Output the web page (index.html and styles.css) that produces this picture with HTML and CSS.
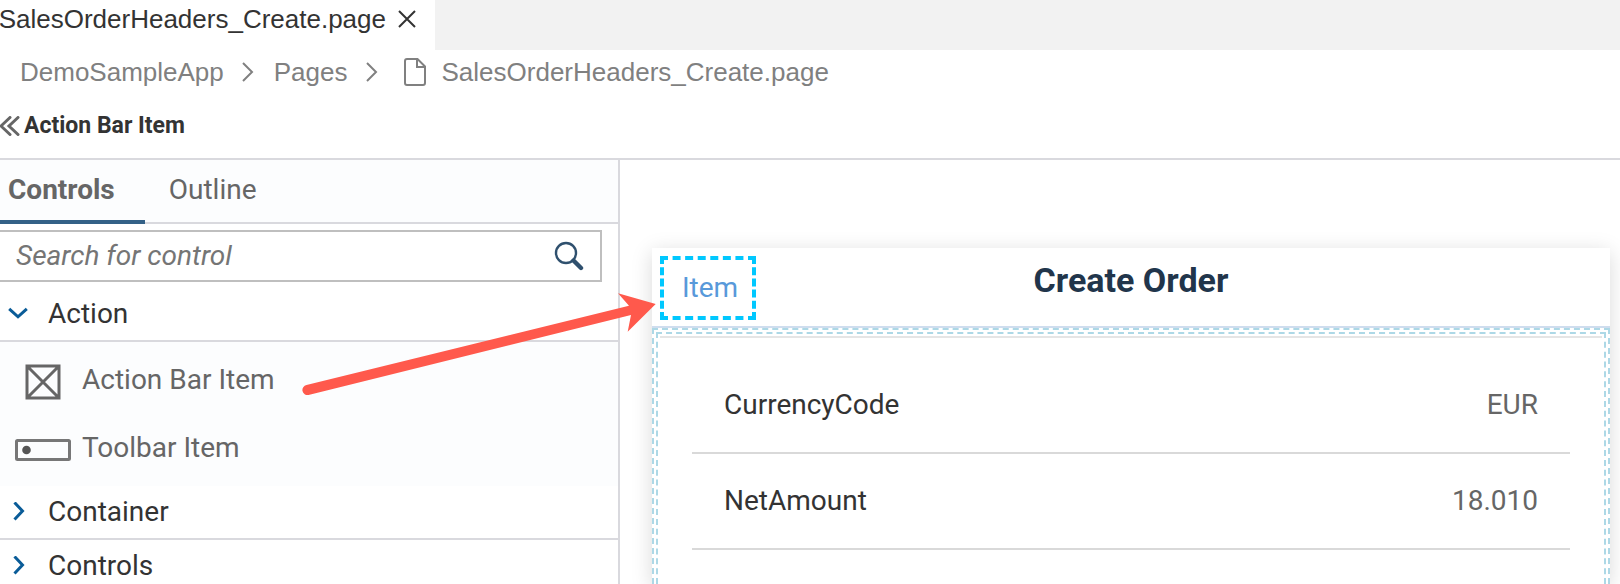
FILE: index.html
```html
<!DOCTYPE html>
<html lang="en">
<head>
<meta charset="utf-8">
<title>SalesOrderHeaders_Create.page</title>
<link rel="stylesheet" href="styles.css">
</head>
<body>
<header class="file-tabs">
  <div class="file-tab">
    <span>SalesOrderHeaders_Create.page</span>
    <button class="icon-button" type="button" aria-label="Close">
      <svg width="18" height="18" viewBox="0 0 18 18"><path d="M1 1 17 17M17 1 1 17" fill="none" stroke="#333" stroke-width="2"/></svg>
    </button>
  </div>
</header>

<nav class="breadcrumb" aria-label="Breadcrumb">
  <a href="#">DemoSampleApp</a>
  <svg class="crumb-sep" width="12" height="20" viewBox="0 0 12 20"><path d="M1 1 10 10 1 19" fill="none" stroke="#808080" stroke-width="2"/></svg>
  <a href="#">Pages</a>
  <svg class="crumb-sep" width="12" height="20" viewBox="0 0 12 20"><path d="M1 1 10 10 1 19" fill="none" stroke="#808080" stroke-width="2"/></svg>
  <svg class="file-icon" width="22" height="28" viewBox="0 0 22 28"><path d="M3 1H13.500L21 8.500V25a2 2 0 0 1-2 2H3a2 2 0 0 1-2-2V3a2 2 0 0 1 2-2ZM13 1V9H21" fill="none" stroke="#808080" stroke-width="2"/></svg>
  <a href="#">SalesOrderHeaders_Create.page</a>
</nav>

<div class="selection-bar">
  <button class="icon-button" type="button" aria-label="Collapse">
    <svg width="20" height="20" viewBox="0 0 20 20"><path d="M10 1.500 1 10 10 18.500M18 1.500 9 10 18 18.500" fill="none" stroke="#666" stroke-width="3" stroke-linecap="round"/></svg>
  </button>
  <h1 class="selection-title">Action Bar Item</h1>
</div>

<main class="workspace">
  <aside class="palette">
    <div class="palette-tabs" role="tablist">
      <button class="palette-tab active" type="button" role="tab" aria-selected="true">Controls</button>
      <button class="palette-tab" type="button" role="tab" aria-selected="false">Outline</button>
    </div>
    <div class="search">
      <input class="search-input" type="search" placeholder="Search for control" aria-label="Search for control">
      <button class="icon-button" type="button" aria-label="Search">
        <svg width="30" height="30" viewBox="0 0 30 30"><circle cx="12" cy="12" r="10" fill="none" stroke="#2f506e" stroke-width="2.400"/><path d="M19.500 19.500 27 27" stroke="#2f506e" stroke-width="4.400" stroke-linecap="round"/></svg>
      </button>
    </div>
    <button class="group" type="button" aria-expanded="true">
      <svg width="20" height="20" viewBox="0 0 20 20"><path d="M1.200 4.800 10 12.800 18.800 4.800" fill="none" stroke="#0a5c98" stroke-width="3"/></svg>
      <span>Action</span>
    </button>
    <ul class="items">
      <li class="item">
        <span class="item-icon"><svg width="36" height="36" viewBox="0 0 36 36"><path d="M2 2H34V34H2ZM2 2 34 34M34 2 2 34" fill="none" stroke="#666" stroke-width="3"/></svg></span>
        <span>Action Bar Item</span>
      </li>
      <li class="item">
        <span class="item-icon"><svg width="56" height="22" viewBox="0 0 56 22"><rect x="1.500" y="1.500" width="53" height="19" rx="1" fill="none" stroke="#777" stroke-width="3"/><circle cx="11.500" cy="11" r="4.300" fill="#555"/></svg></span>
        <span>Toolbar Item</span>
      </li>
    </ul>
    <button class="group" type="button" aria-expanded="false">
      <svg width="20" height="20" viewBox="0 0 20 20"><path d="M6.500 .5 14.500 9 6.500 17.500" fill="none" stroke="#0a5c98" stroke-width="3"/></svg>
      <span>Container</span>
    </button>
    <button class="group" type="button" aria-expanded="false">
      <svg width="20" height="20" viewBox="0 0 20 20"><path d="M6.500 .5 14.500 9 6.500 17.500" fill="none" stroke="#0a5c98" stroke-width="3"/></svg>
      <span>Controls</span>
    </button>
  </aside>

  <section class="canvas">
    <article class="page-card">
      <header class="page-header">
        <button class="bar-item" type="button">Item</button>
        <h2 class="page-title">Create Order</h2>
      </header>
      <div class="drop-outer">
        <div class="drop-inner">
          <dl class="fields">
            <div class="field"><dt>CurrencyCode</dt><dd>EUR</dd></div>
            <div class="field"><dt>NetAmount</dt><dd>18.010</dd></div>
          </dl>
        </div>
      </div>
    </article>
  </section>

  <svg class="drag-arrow" width="354" height="110" viewBox="0 0 354 110" aria-hidden="true">
    <path d="M6.500 93 329 13.700 318 1.300 355.700 12 327.700 39.700 331 23 8.500 103A5 5 0 0 1 6.500 93Z" fill="#ff594c"/>
  </svg>
</main>
</body>
</html>
```
FILE: styles.css
```css
* { box-sizing: border-box; }

body {
  display: flex;
  flex-direction: column;
  height: 100vh;
  margin: 0;
  overflow: hidden;
  background: #fff;
  color: #333;
  font-family: Roboto, "Noto Sans", sans-serif;
  font-size: 28px;
  line-height: 36px;
}

button {
  padding: 0;
  border: 0;
  background: none;
  color: inherit;
  font: inherit;
}

svg { display: block; flex: none; }
h1, h2, ul, dl, dd { margin: 0; padding: 0; }

.file-tabs {
  display: flex;
  flex: none;
  height: 50px;
  background: #f2f2f2;
}

.file-tab {
  display: flex;
  align-items: center;
  justify-content: flex-end;
  gap: 12px;
  width: 435px;
  padding: 0 19px 12px 0;
  background: #fff;
  font-family: "Liberation Sans", Arial, sans-serif;
  font-size: 26px;
}

.breadcrumb {
  display: flex;
  flex: none;
  align-items: center;
  height: 44px;
  padding-left: 20px;
  color: #808080;
  font-family: "Liberation Sans", Arial, sans-serif;
  font-size: 26px;
}

.breadcrumb a { color: inherit; text-decoration: none; }
.crumb-sep { margin: 0 20px 0 18px; }
.file-icon { margin: 0 16px 0 6px; }

.selection-bar {
  display: flex;
  flex: none;
  align-items: center;
  gap: 4px;
  height: 66px;
  border-bottom: 2px solid #d9d9de;
}

.selection-title { font-size: 23px; font-weight: 700; }

.workspace {
  position: relative;
  display: flex;
  flex: 1;
  min-height: 0;
}

.palette {
  flex: none;
  width: 620px;
  border-right: 2px solid #d9d9de;
}

.palette-tabs {
  display: flex;
  height: 64px;
  border-bottom: 2px solid #d9d9de;
  background: #fcfdfe;
  color: #666;
}

.palette-tab {
  height: 64px;
  padding: 0 24px;
  border-bottom: 4px solid transparent;
}

.palette-tab.active {
  padding: 0 30px 0 8px;
  border-color: #346187;
  font-weight: 700;
}

.search {
  display: flex;
  align-items: center;
  height: 52px;
  margin: 6px 16px 6px 0;
  padding: 0 16px;
  border: 2px solid #bfbfbf;
  border-left: 0;
}

.search-input {
  flex: 1;
  min-width: 0;
  padding: 0;
  border: 0;
  outline: 0;
  background: none;
  color: #333;
  font: inherit;
}

.search-input::placeholder { color: #757575; font-style: italic; }

.group {
  display: flex;
  align-items: center;
  gap: 20px;
  width: 100%;
  height: 54px;
  padding-left: 8px;
  border-bottom: 2px solid #d9d9de;
}

.items {
  padding: 4px 0;
  background: #fcfdfe;
  color: #666;
  list-style: none;
}

.item {
  display: flex;
  align-items: center;
  height: 68px;
}

.item-icon {
  display: flex;
  justify-content: center;
  width: 82px;
  padding: 4px 0 0 4px;
}

.canvas {
  display: flex;
  flex: 1;
  min-width: 0;
  padding: 88px 10px 0 32px;
}

.page-card {
  display: flex;
  flex: 1;
  flex-direction: column;
  min-width: 0;
  box-shadow: 0 4px 20px rgba(0, 0, 0, 0.15);
}

.page-header {
  display: grid;
  flex: none;
  grid-template-columns: 1fr auto 1fr;
  align-items: start;
  height: 80px;
  padding: 8px;
  border-bottom: 2px solid #cfddee;
  background: #fff;
}

.bar-item {
  justify-self: start;
  width: 96px;
  height: 64px;
  padding-left: 4px;
  border: 4px dashed #00c8ff;
  color: #5899da;
}

.page-title {
  padding-top: 6px;
  color: #21354b;
  font-size: 34px;
  font-weight: 700;
}

.drop-outer {
  flex: 1;
  padding: 2px 2px 0;
  border: 2px dashed #add8e6;
  border-bottom: 0;
  background: #fff;
}

.drop-inner {
  height: 100%;
  padding: 2px 2px 0;
  border: 2px dashed #add8e6;
  border-bottom: 0;
}

.fields {
  padding: 20px 32px 0;
  border-top: 2px solid #e5e5e5;
}

.field {
  display: flex;
  align-items: center;
  justify-content: space-between;
  height: 96px;
  padding: 0 32px;
  border-bottom: 2px solid #d9d9d9;
}

.field dd { color: #666; }

.drag-arrow {
  position: absolute;
  top: 132px;
  left: 300px;
  overflow: visible;
}
```
